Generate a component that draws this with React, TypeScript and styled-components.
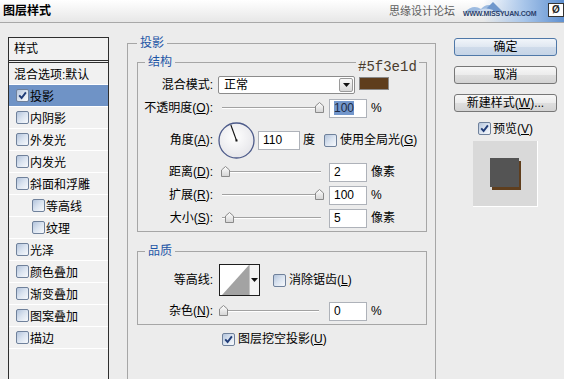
import React from 'react';
import styled, { createGlobalStyle } from 'styled-components';

const GlobalStyle = createGlobalStyle`
  html, body {
    margin: 0;
    padding: 0;
    overflow: hidden;
    background: #ececec;
  }
  body {
    font-family: "Liberation Sans", "Noto Sans CJK SC", sans-serif;
    font-size: 12px;
    color: #000;
  }
`;

const Window = styled.div`
  width: 564px;
  height: 379px;
  overflow: hidden;
  background: #ececec;
  display: flex;
  flex-direction: column;
`;

const TitleBar = styled.div`
  height: 22px;
  flex-shrink: 0;
  display: flex;
  align-items: center;
  justify-content: space-between;
  padding-left: 3px;
  background: linear-gradient(#ffffff, #e7e7e7);
  border-bottom: 1px solid #a8a8a8;
`;

const Title = styled.h1`
  margin: 0;
  font-size: 12px;
  font-weight: bold;
  line-height: 22px;
`;

const Brand = styled.div`
  display: flex;
  align-items: center;
  height: 22px;
`;

const BrandName = styled.span`
  font-size: 11px;
  line-height: 14px;
  color: #5e5e5e;
  margin-right: 8px;
`;

const BrandMark = styled.div`
  position: relative;
  width: 101px;
  height: 22px;
  display: flex;
  align-items: flex-end;
  background: linear-gradient(to right, rgba(255, 255, 255, 0) 20%, #a9c6ea 60%, #5f90d0);
`;

const BrandArt = styled.svg`
  position: absolute;
  left: 0;
  top: 0;
`;

const BrandUrl = styled.span`
  position: relative;
  font-size: 7px;
  font-weight: bold;
  line-height: 9px;
  color: #2b3f6b;
  margin-bottom: 4px;
  letter-spacing: -0.2px;
`;

const BrandBadge = styled.span`
  position: absolute;
  right: 0;
  top: 3px;
  width: 14px;
  height: 12px;
  background: #fff;
  border: 1px solid #333;
  font-size: 10px;
  font-weight: bold;
  line-height: 12px;
  text-align: center;
  color: #222;
`;

const Body = styled.div`
  flex: 1;
  min-height: 0;
  display: flex;
  align-items: flex-start;
  padding: 13px 0 0 8px;
`;

/* left list of effects */

const StyleList = styled.ul`
  list-style: none;
  margin: 1px 0 0;
  padding: 0;
  width: 101px;
  height: 360px;
  box-sizing: border-box;
  border: 1px solid #2e2e2e;
  background: #f1f1f1;
  flex-shrink: 0;
`;

const ListHeader = styled.li`
  height: 22px;
  line-height: 22px;
  padding-left: 5px;
  border-bottom: 3px double #2e2e2e;
`;

const ListItem = styled.li<{ $active?: boolean; $indent?: number }>`
  height: 21px;
  display: flex;
  align-items: center;
  gap: 1px;
  padding-left: ${(p) => p.$indent ?? 7}px;
  border-bottom: 1px solid #ffffff;
  background: ${(p) => (p.$active ? '#6f93c6' : 'transparent')};
  white-space: nowrap;
`;

/* checkbox */

const Box = styled.span`
  width: 13px;
  height: 13px;
  box-sizing: border-box;
  border: 1px solid #6f819b;
  border-radius: 2px;
  background: linear-gradient(135deg, #b3c4dc 0%, #dbe4f0 50%, #f7f9fc 100%);
  display: inline-flex;
  align-items: center;
  justify-content: center;
  flex-shrink: 0;
`;

function Check({ checked }: { checked?: boolean }) {
  return (
    <Box>
      {checked && (
        <svg width="9" height="9" viewBox="0 0 9 9">
          <path d="M1.2 4.4 L3.6 7 L7.9 1.4" fill="none" stroke="#1f3c78" strokeWidth="1.9" />
        </svg>
      )}
    </Box>
  );
}

const CheckField = styled.label<{ $ml?: number }>`
  display: flex;
  align-items: center;
  gap: 3px;
  margin-left: ${(p) => p.$ml ?? 0}px;
  line-height: 14px;
  white-space: nowrap;
`;

const Key = styled.u`
  text-underline-offset: 1px;
`;

/* center groups */

const EffectPanel = styled.fieldset`
  margin: 0 0 0 18px;
  padding: 0 9px;
  width: 309px;
  height: 360px;
  box-sizing: border-box;
  border: 1px solid #a6a6a6;
  min-width: 0;
  flex-shrink: 0;
`;

const Section = styled.fieldset<{ $mt: number }>`
  position: relative;
  margin: ${(p) => p.$mt}px 0 0;
  padding: 6px 0 3px;
  width: 290px;
  box-sizing: border-box;
  border: 1px solid #a6a6a6;
  min-width: 0;
`;

const Legend = styled.legend<{ $offset?: number }>`
  margin-left: ${(p) => p.$offset ?? 0}px;
  padding: 0 3px;
  font-size: 12px;
  line-height: 14px;
  color: #1d55a6;
`;

const Stack = styled.div<{ $gap: number }>`
  display: flex;
  flex-direction: column;
  gap: ${(p) => p.$gap}px;
`;

const Row = styled.div<{ $h: number; $mt?: number; $ml?: number }>`
  display: flex;
  align-items: center;
  height: ${(p) => p.$h}px;
  margin-top: ${(p) => p.$mt ?? 0}px;
  margin-left: ${(p) => p.$ml ?? 0}px;
`;

const FieldLabel = styled.span`
  width: 75px;
  flex-shrink: 0;
  text-align: right;
  line-height: 14px;
  white-space: nowrap;
`;

const Select = styled.div`
  margin-left: 5px;
  width: 137px;
  height: 18px;
  box-sizing: border-box;
  border: 1px solid #8c8c8c;
  border-radius: 2px;
  background: #fff;
  display: flex;
  align-items: center;
`;

const SelectText = styled.span`
  flex: 1;
  padding-left: 5px;
  line-height: 14px;
`;

const SelectButton = styled.span`
  width: 14px;
  height: 14px;
  margin-right: 1px;
  box-sizing: border-box;
  border: 1px solid #9a9a9a;
  border-radius: 2px;
  background: linear-gradient(#fafafa, #d8d8d8);
  display: flex;
  align-items: center;
  justify-content: center;
`;

const Swatch = styled.span<{ $color: string }>`
  position: relative;
  margin-left: 4px;
  width: 30px;
  height: 13px;
  box-sizing: border-box;
  border: 1px solid #8a8a8a;
  background: ${(p) => p.$color};
  align-self: flex-start;
  margin-top: 2px;
`;

const HexNote = styled.span`
  position: absolute;
  left: -4px;
  top: -18px;
  padding: 0 2px;
  background: #ececec;
  font-family: "Liberation Mono", monospace;
  font-size: 14px;
  line-height: 14px;
  color: #4a3c2e;
  white-space: nowrap;
`;

const Slider = styled.div<{ $ml?: number }>`
  position: relative;
  width: 103px;
  height: 12px;
  margin-left: ${(p) => p.$ml ?? 8}px;
  flex-shrink: 0;
`;

const Track = styled.div`
  position: absolute;
  left: 1px;
  right: 3px;
  top: 5px;
  height: 1px;
  background: #a2a2a2;
  border-bottom: 1px solid #ffffff;
`;

const ThumbSvg = styled.svg`
  position: absolute;
  top: 0;
`;

function SliderControl({ pos, ml }: { pos: number; ml?: number }) {
  return (
    <Slider $ml={ml}>
      <Track />
      <ThumbSvg width="9" height="11" viewBox="0 0 9 11" style={{ left: Math.round(pos * 94) }}>
        <defs>
          <linearGradient id="thumbFill" x1="0" y1="0" x2="0" y2="1">
            <stop offset="0" stopColor="#ffffff" />
            <stop offset="1" stopColor="#d4d4d4" />
          </linearGradient>
        </defs>
        <path d="M0.5 10.5 V4 L4.5 0.5 L8.5 4 V10.5 Z" fill="url(#thumbFill)" stroke="#8a8a8a" />
      </ThumbSvg>
    </Slider>
  );
}

const NumberBox = styled.span<{ $w?: number; $ml?: number }>`
  margin-left: ${(p) => p.$ml ?? 5}px;
  width: ${(p) => p.$w ?? 38}px;
  height: 19px;
  box-sizing: border-box;
  border: 1px solid #aeb2b9;
  background: #fff;
  padding-left: 4px;
  line-height: 17px;
  flex-shrink: 0;
`;

const Selected = styled.span`
  background: #7397cc;
  color: #1b2a45;
`;

const Unit = styled.span<{ $ml?: number }>`
  margin-left: ${(p) => p.$ml ?? 4}px;
  line-height: 14px;
  white-space: nowrap;
`;

const Dial = styled.svg`
  margin-left: 5px;
  flex-shrink: 0;
`;

const Contour = styled.div`
  margin-left: 6px;
  width: 41px;
  height: 32px;
  box-sizing: border-box;
  border: 1px solid #1e1e1e;
  background: #fff;
  display: flex;
  flex-shrink: 0;
`;

const ContourMenu = styled.span`
  flex: 1;
  border-left: 1px solid #c4c4c4;
  background: #f3f3f3;
  display: flex;
  align-items: center;
  justify-content: center;
`;

/* right column */

const Actions = styled.div`
  margin: 2px 0 0 18px;
  width: 103px;
  display: flex;
  flex-direction: column;
  align-items: center;
  flex-shrink: 0;
`;

const ButtonStack = styled.div`
  display: flex;
  flex-direction: column;
  gap: 10px;
`;

const Button = styled.button<{ $primary?: boolean }>`
  width: 103px;
  height: 18px;
  padding: 0;
  border-radius: 3px;
  border: 1px solid ${(p) => (p.$primary ? '#4f78a8' : '#777777')};
  background: ${(p) =>
    p.$primary
      ? 'linear-gradient(#f1f5fa, #dfe7f1 50%, #cfdbea 51%, #c5d4e6)'
      : 'linear-gradient(#f7f7f7, #ececec 50%, #dedede 51%, #d3d3d3)'};
  font-family: inherit;
  font-size: 12px;
  line-height: 16px;
  color: #000;
`;

const PreviewToggle = styled(CheckField)`
  margin-top: 8px;
  height: 17px;
  gap: 2px;
`;

const PreviewFrame = styled.div`
  margin-top: 4px;
  width: 65px;
  height: 66px;
  box-sizing: border-box;
  background: #d9d9d9;
  border-right: 1px solid #ffffff;
  border-bottom: 1px solid #ffffff;
  display: flex;
  align-items: center;
  justify-content: center;
`;

const PreviewSquare = styled.div`
  width: 29px;
  height: 29px;
  margin: 0 2px 2px 0;
  background: #545454;
  box-shadow: 2px 3px 0 #5f3e1d;
`;

const Arrow = () => (
  <svg width="7" height="4" viewBox="0 0 7 4">
    <path d="M0 0 H7 L3.5 4 Z" fill="#111" />
  </svg>
);

const effects: { name: string; checked?: boolean; active?: boolean; indent?: number }[] = [
  { name: '投影', checked: true, active: true },
  { name: '内阴影' },
  { name: '外发光' },
  { name: '内发光' },
  { name: '斜面和浮雕' },
  { name: '等高线', indent: 23 },
  { name: '纹理', indent: 23 },
  { name: '光泽' },
  { name: '颜色叠加' },
  { name: '渐变叠加' },
  { name: '图案叠加' },
  { name: '描边' },
];

export default function App() {
  const angle = 110;
  const rad = (angle * Math.PI) / 180;
  const hx = 18.5 + Math.cos(rad) * 16.5;
  const hy = 18.5 - Math.sin(rad) * 16.5;

  return (
    <Window>
      <GlobalStyle />
      <TitleBar>
        <Title>图层样式</Title>
        <Brand>
          <BrandName>思缘设计论坛</BrandName>
          <BrandMark>
            <BrandArt width="101" height="22" viewBox="0 0 101 22">
              <path d="M2 12 Q10 4 18 9 Q24 2 32 7 L36 12 Z" fill="#9dbbe0" />
              <path d="M20 12 L30 2 L40 12 Z" fill="#6f97cc" />
              <path d="M12 12 Q22 6 30 10 L30 12 Z" fill="#c9d9ee" />
            </BrandArt>
            <BrandUrl>WWW.MISSYUAN.COM</BrandUrl>
            <BrandBadge>Ø</BrandBadge>
          </BrandMark>
        </Brand>
      </TitleBar>

      <Body>
        <StyleList>
          <ListHeader>样式</ListHeader>
          <ListItem $indent={5}>混合选项:默认</ListItem>
          {effects.map((e) => (
            <ListItem key={e.name} $active={e.active} $indent={e.indent}>
              <Check checked={e.checked} />
              {e.name}
            </ListItem>
          ))}
        </StyleList>

        <EffectPanel>
          <Legend>投影</Legend>

          <Section $mt={5}>
            <Legend $offset={7}>结构</Legend>
            <Stack $gap={3}>
              <Row $h={20}>
                <FieldLabel>混合模式:</FieldLabel>
                <Select>
                  <SelectText>正常</SelectText>
                  <SelectButton>
                    <Arrow />
                  </SelectButton>
                </Select>
                <Swatch $color="#5f3e1d">
                  <HexNote>#5f3e1d</HexNote>
                </Swatch>
              </Row>
              <Row $h={20}>
                <FieldLabel>
                  不透明度(<Key>O</Key>):
                </FieldLabel>
                <SliderControl pos={1} />
                <NumberBox>
                  <Selected>100</Selected>
                </NumberBox>
                <Unit>%</Unit>
              </Row>
              <Row $h={38}>
                <FieldLabel>
                  角度(<Key>A</Key>):
                </FieldLabel>
                <Dial width="37" height="37" viewBox="0 0 37 37">
                  <defs>
                    <radialGradient id="dialFill" cx="0.45" cy="0.4" r="0.6">
                      <stop offset="0" stopColor="#ffffff" />
                      <stop offset="1" stopColor="#e6e6ea" />
                    </radialGradient>
                  </defs>
                  <circle cx="18.5" cy="18.5" r="17.5" fill="url(#dialFill)" stroke="#4d5b8a" strokeWidth="1.3" />
                  <line x1="18.5" y1="18.5" x2={hx} y2={hy} stroke="#111" strokeWidth="1.1" />
                  <rect x="17.5" y="17.5" width="2" height="2" fill="#111" />
                </Dial>
                <NumberBox $w={42} $ml={3}>
                  {angle}
                </NumberBox>
                <Unit $ml={3}>度</Unit>
                <CheckField $ml={9}>
                  <Check />
                  <span>
                    使用全局光(<Key>G</Key>)
                  </span>
                </CheckField>
              </Row>
              <Row $h={20}>
                <FieldLabel>
                  距离(<Key>D</Key>):
                </FieldLabel>
                <SliderControl pos={0} />
                <NumberBox>2</NumberBox>
                <Unit>像素</Unit>
              </Row>
              <Row $h={20}>
                <FieldLabel>
                  扩展(<Key>R</Key>):
                </FieldLabel>
                <SliderControl pos={1} />
                <NumberBox>100</NumberBox>
                <Unit>%</Unit>
              </Row>
              <Row $h={20}>
                <FieldLabel>
                  大小(<Key>S</Key>):
                </FieldLabel>
                <SliderControl pos={0.04} />
                <NumberBox>5</NumberBox>
                <Unit>像素</Unit>
              </Row>
            </Stack>
          </Section>

          <Section $mt={12}>
            <Legend $offset={7}>品质</Legend>
            <Stack $gap={5}>
              <Row $h={32}>
                <FieldLabel>等高线:</FieldLabel>
                <Contour>
                  <svg width="29" height="30" viewBox="0 0 29 30">
                    <polygon points="2,30 29,0 29,30" fill="#a3a3a3" />
                  </svg>
                  <ContourMenu>
                    <Arrow />
                  </ContourMenu>
                </Contour>
                <CheckField $ml={13}>
                  <Check />
                  <span>
                    消除锯齿(<Key>L</Key>)
                  </span>
                </CheckField>
              </Row>
              <Row $h={20}>
                <FieldLabel>
                  杂色(<Key>N</Key>):
                </FieldLabel>
                <SliderControl pos={0} ml={6} />
                <NumberBox $ml={7}>0</NumberBox>
                <Unit>%</Unit>
              </Row>
            </Stack>
          </Section>

          <Row $h={20} $mt={4} $ml={85}>
            <CheckField>
              <Check checked />
              <span>
                图层挖空投影(<Key>U</Key>)
              </span>
            </CheckField>
          </Row>
        </EffectPanel>

        <Actions>
          <ButtonStack>
            <Button $primary>确定</Button>
            <Button>取消</Button>
            <Button>
              新建样式(<Key>W</Key>)...
            </Button>
          </ButtonStack>
          <PreviewToggle>
            <Check checked />
            <span>
              预览(<Key>V</Key>)
            </span>
          </PreviewToggle>
          <PreviewFrame>
            <PreviewSquare />
          </PreviewFrame>
        </Actions>
      </Body>
    </Window>
  );
}
